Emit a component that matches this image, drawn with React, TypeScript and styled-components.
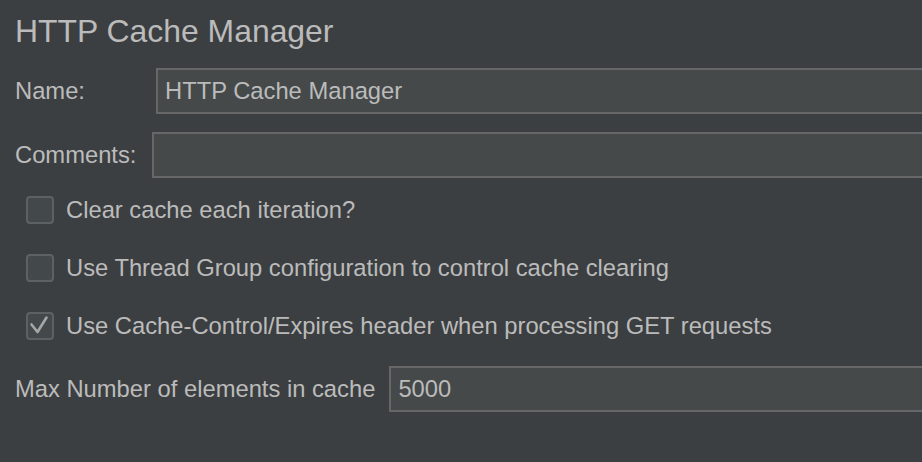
import React from "react";
import styled, { createGlobalStyle } from "styled-components";

const GlobalStyle = createGlobalStyle`
  html, body {
    margin: 0;
    padding: 0;
    background: #3c3f41;
    overflow: hidden;
  }
  #root {
    min-height: 100vh;
  }
`;

const Page = styled.div`
  box-sizing: border-box;
  width: 922px;
  height: 462px;
  overflow: hidden;
  background: #3c3f41;
  color: #bbbbbb;
  font-family: "Liberation Sans", Arial, sans-serif;
  font-size: 23.75px;
  padding: 12px 0 0 15px;
  display: flex;
  flex-direction: column;
`;

const Title = styled.h1`
  margin: 0;
  font-weight: 400;
  font-size: 31.9px;
  line-height: 38px;
  height: 38px;
  color: #bbbbbb;
`;

const Form = styled.div`
  display: flex;
  flex-direction: column;
  margin-top: 18px;
`;

const FieldRow = styled.div<{ $top?: number }>`
  display: flex;
  align-items: center;
  height: 46px;
  margin-top: ${(p) => p.$top ?? 0}px;
  margin-right: -20px;
`;

const Label = styled.label<{ $width?: number; $gap?: number }>`
  flex: none;
  width: ${(p) => (p.$width ? `${p.$width}px` : "auto")};
  margin-right: ${(p) => p.$gap ?? 0}px;
  white-space: nowrap;
  line-height: 28px;
`;

const TextInput = styled.div`
  box-sizing: border-box;
  flex: 1;
  height: 46px;
  background: #45494a;
  border: 2px solid #676767;
  padding: 0 0 0 7px;
  display: flex;
  align-items: center;
  color: #bbbbbb;
  white-space: nowrap;
`;

const Checks = styled.div`
  display: flex;
  flex-direction: column;
  gap: 30px;
  margin-top: 18px;
  padding-left: 11px;
`;

const CheckRow = styled.div`
  display: flex;
  align-items: center;
  height: 28px;
  gap: 12px;
`;

const Box = styled.span`
  box-sizing: border-box;
  flex: none;
  width: 28px;
  height: 28px;
  border: 2px solid #5d6163;
  border-radius: 4px;
  background: #43494a;
  display: flex;
  align-items: center;
  justify-content: center;
`;

const CheckText = styled.span`
  white-space: nowrap;
  line-height: 28px;
`;

const Mark = () => (
  <svg width="24" height="24" viewBox="0 0 24 24" fill="none">
    <path
      d="M3.5 10.5 L9.5 18 L18.5 3.5"
      stroke="#a6a6a6"
      strokeWidth="2.6"
      strokeLinecap="round"
      strokeLinejoin="round"
    />
  </svg>
);

const Checkbox = ({ checked, label }: { checked?: boolean; label: string }) => (
  <CheckRow>
    <Box>{checked && <Mark />}</Box>
    <CheckText>{label}</CheckText>
  </CheckRow>
);

export default function App() {
  return (
    <>
      <GlobalStyle />
      <Page>
        <Title>HTTP Cache Manager</Title>
        <Form>
          <FieldRow>
            <Label $width={141}>Name:</Label>
            <TextInput>HTTP Cache Manager</TextInput>
          </FieldRow>
          <FieldRow $top={18}>
            <Label $width={137}>Comments:</Label>
            <TextInput />
          </FieldRow>
        </Form>
        <Checks>
          <Checkbox label="Clear cache each iteration?" />
          <Checkbox label="Use Thread Group configuration to control cache clearing" />
          <Checkbox checked label="Use Cache-Control/Expires header when processing GET requests" />
        </Checks>
        <FieldRow $top={26}>
          <Label $gap={14}>Max Number of elements in cache</Label>
          <TextInput>5000</TextInput>
        </FieldRow>
      </Page>
    </>
  );
}
